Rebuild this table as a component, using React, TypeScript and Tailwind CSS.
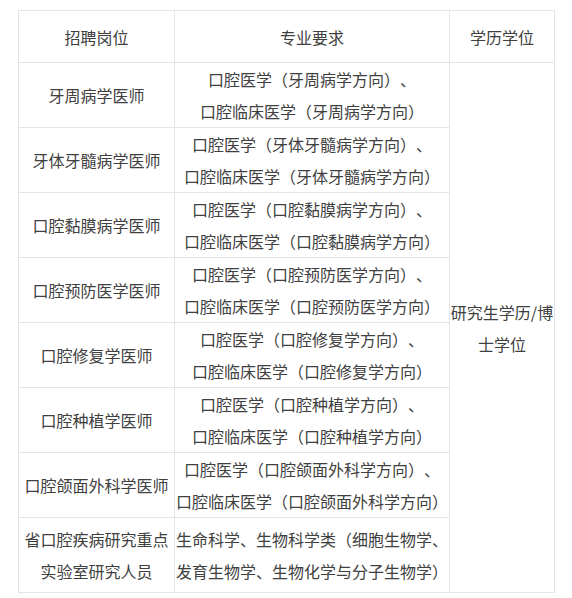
const rows: { post: string[]; major: string[] }[] = [
  { post: ["牙周病学医师"], major: ["口腔医学（牙周病学方向）、", "口腔临床医学（牙周病学方向）"] },
  { post: ["牙体牙髓病学医师"], major: ["口腔医学（牙体牙髓病学方向）、", "口腔临床医学（牙体牙髓病学方向）"] },
  { post: ["口腔黏膜病学医师"], major: ["口腔医学（口腔黏膜病学方向）、", "口腔临床医学（口腔黏膜病学方向）"] },
  { post: ["口腔预防医学医师"], major: ["口腔医学（口腔预防医学方向）、", "口腔临床医学（口腔预防医学方向）"] },
  { post: ["口腔修复学医师"], major: ["口腔医学（口腔修复学方向）、", "口腔临床医学（口腔修复学方向）"] },
  { post: ["口腔种植学医师"], major: ["口腔医学（口腔种植学方向）、", "口腔临床医学（口腔种植学方向）"] },
  { post: ["口腔颌面外科学医师"], major: ["口腔医学（口腔颌面外科学方向）、", "口腔临床医学（口腔颌面外科学方向）"] },
  { post: ["省口腔疾病研究重点", "实验室研究人员"], major: ["生命科学、生物科学类（细胞生物学、", "发育生物学、生物化学与分子生物学）"] },
];

function Lines({ items }: { items: string[] }) {
  return (
    <>
      {items.map((t) => (
        <div key={t} className="whitespace-nowrap">
          {t}
        </div>
      ))}
    </>
  );
}

export default function App() {
  return (
    <div
      className="w-[572px] h-[598px] bg-white pt-[10px] pl-[18px]"
      style={{ fontFamily: '"Noto Sans CJK SC", "Noto Sans", sans-serif' }}
    >
      <table className="table-fixed border-collapse text-[16px] leading-[32px] text-[#404040] text-center [text-spacing-trim:space-all]">
        <colgroup>
          <col className="w-[156px]" />
          <col className="w-[275px]" />
          <col className="w-[105px]" />
        </colgroup>
        <tbody>
          <tr className="h-[52px]">
            <td className="border border-[#e4e4e4] p-0">招聘岗位</td>
            <td className="border border-[#e4e4e4] p-0">专业要求</td>
            <td className="border border-[#e4e4e4] p-0">学历学位</td>
          </tr>
          {rows.map((r, i) => (
            <tr key={i} className={i === rows.length - 1 ? "h-[75px]" : "h-[65px]"}>
              <td className="border border-[#e4e4e4] p-0 align-middle">
                <Lines items={r.post} />
              </td>
              <td className="border border-[#e4e4e4] p-0 align-middle">
                <Lines items={r.major} />
              </td>
              {i === 0 && (
                <td rowSpan={rows.length} className="border border-[#e4e4e4] p-0 align-middle">
                  <div className="whitespace-nowrap">研究生学历/博</div>
                  <div>士学位</div>
                </td>
              )}
            </tr>
          ))}
        </tbody>
      </table>
    </div>
  );
}
